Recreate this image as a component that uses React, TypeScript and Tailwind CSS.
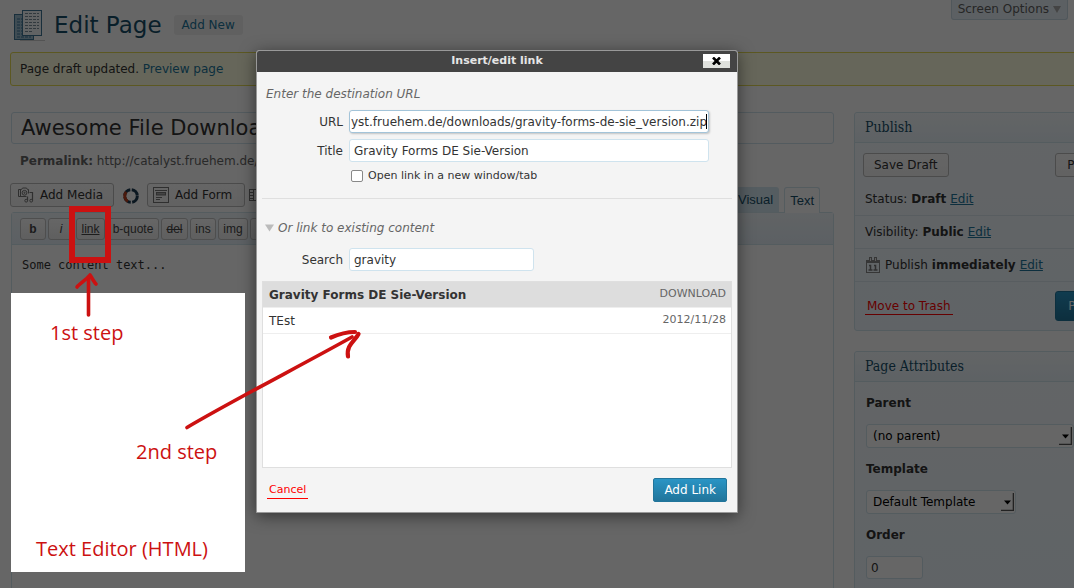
import type { ReactNode } from "react";

const results = [
  { title: "Gravity Forms DE Sie-Version", info: "DOWNLOAD", selected: true },
  { title: "TEst", info: "2012/11/28", selected: false },
];

const field =
  "h-[23px] rounded-[3px] border border-[#cfe3ee] bg-white px-1 text-xs text-[#333] outline-none";
const greyButton =
  "flex items-center rounded-[3px] border border-[#bbb] bg-gradient-to-b from-[#fefefe] to-[#f4f4f4] text-[#333]";

function PagesIcon() {
  return (
    <svg width="32" height="32" viewBox="0 0 32 32" aria-hidden="true">
      <path d="M6 31.5H31" stroke="#d0d0d0" />
      <rect x="0.5" y="5.5" width="19" height="25" fill="#9dbdd0" stroke="#3f7597" />
      <path d="M3 10h14M3 13h14M3 16h14M3 19h14M3 22h14M3 25h14M3 28h14" stroke="#3f7597" strokeDasharray="3 1" />
      <rect x="8.500" y="1.5" width="19" height="25" fill="#f3f7fa" stroke="#3f7597" />
      <path d="M11 4.5h14M11 7.5h14M11 10.5h14M11 13.5h14M11 16.5h14M11 19.5h14M11 22.5h8" stroke="#7c8f9c" strokeDasharray="3 1" />
    </svg>
  );
}

function MediaIcon() {
  return (
    <svg width="16" height="16" viewBox="0 0 16 16" fill="none" stroke="#777" aria-hidden="true">
      <path d="M.5 2.5v7h8M.5 2.5h3l1-1.500h4l1 1.500h1v4M2.5 2.5v7" />
      <circle cx="6.500" cy="5.800" r="2.400" />
      <circle cx="6.500" cy="5.800" r=".6" />
      <path d="M9.500 13.500V9.500M14.500 13.500V5.500h-3" strokeWidth="1.200" />
      <circle cx="8.200" cy="13.700" r="1.400" />
      <circle cx="13.200" cy="13.700" r="1.400" />
    </svg>
  );
}

function RingIcon() {
  return (
    <svg width="18" height="18" viewBox="0 0 18 18" fill="none" strokeWidth="3" aria-hidden="true">
      <circle cx="9" cy="9" r="6.300" stroke="#1d3a52" strokeDasharray="8.400 1.500" />
      <path d="M5.800 14.500A6.300 6.300 0 0 1 4.200 5" stroke="#b8401f" />
    </svg>
  );
}

function FormIcon() {
  return (
    <svg width="16" height="16" viewBox="0 0 16 16" fill="none" stroke="#777" aria-hidden="true">
      <rect x=".5" y=".5" width="15" height="15" />
      <path d="M2 3.5h12M3 10.5h6M3 12.5h4" />
      <rect x="3.5" y="5.5" width="9" height="2.5" fill="#aaa" />
    </svg>
  );
}

function GridIcon() {
  return (
    <svg width="16" height="16" viewBox="0 0 16 16" fill="none" stroke="#777" aria-hidden="true">
      <rect x=".5" y="2.5" width="15" height="11" />
      <path d="M4.5 2.5v11M.5 5.5h4M.5 8.5h4M.5 11.5h4M7 8h7" />
    </svg>
  );
}

function CalendarIcon() {
  return (
    <svg className="mx-px" width="14" height="17" viewBox="0 0 14 17" fill="none" stroke="#888" aria-hidden="true">
      <rect x=".5" y="3.5" width="13" height="12" />
      <path d="M1 5h12" strokeWidth="2" />
      <rect x="3.5" y=".5" width="2" height="4" fill="#eee" />
      <rect x="8.500" y=".5" width="2" height="4" fill="#eee" />
      <path d="M3 8.500h1.500v5M2.500 13h4M8 8.500h1.500v5M7.500 13h4" strokeWidth="1.500" stroke="#777" />
    </svg>
  );
}

function Edit() {
  return (
    <a href="#edit" className="text-[#21759b] underline">
      Edit
    </a>
  );
}

function Panel({ title, children }: { title: string; children: ReactNode }) {
  return (
    <section className="rounded-[3px] border border-[#d1e5ee] bg-gradient-to-b from-[#f7fcfe] to-[#eff8ff]">
      <h3 className="h-[30px] rounded-t-[3px] border-b border-[#d1e5ee] bg-gradient-to-b from-[#f7fcfe] to-[#eaf4fb] px-[10px] font-['DejaVu_Serif_Condensed','DejaVu_Serif',serif] text-sm leading-[29px] text-[#174f69]">
        {title}
      </h3>
      {children}
    </section>
  );
}

function Select({ id, value, width }: { id: string; value: string; width: string }) {
  return (
    <div className={`relative ${width}`}>
      <select
        id={id}
        className="h-6 w-full appearance-none rounded-[3px] border border-[#d1e5ee] bg-white pl-1.5 text-xs text-black"
      >
        <option>{value}</option>
      </select>
      <svg className="pointer-events-none absolute right-[2px] top-[3px]" width="13" height="18" viewBox="0 0 13 18" aria-hidden="true">
        <path d="M0 17.5h12.5V0" fill="none" stroke="#555" strokeWidth="1.600" />
        <path d="M3 7.500h7l-3.500 4z" fill="#000" />
      </svg>
    </div>
  );
}

function Editor() {
  const tag =
    "h-[22px] rounded-[3px] border border-[#c3c3c3] bg-gradient-to-b from-white to-[#eee] text-center font-['Liberation_Sans',Arial,sans-serif] text-xs text-[#464646]";
  return (
    <main className="flex min-w-0 flex-1 flex-col">
      <input
        aria-label="Page title"
        defaultValue="Awesome File Download"
        className="h-8 w-full rounded-[3px] border border-[#cfe3ee] bg-white px-[9px] text-[21px] text-[#333]"
      />
      <p className="mt-[7px] px-[9px] text-xs leading-5 text-[#666]">
        <strong>Permalink:</strong> http://catalyst.fruehem.de/
      </p>
      <div className="mt-3 flex h-[29px] items-start">
        <button className={`${greyButton} -ml-px h-6 w-[104px] gap-1.5 pl-[7px]`}>
          <MediaIcon />
          Add Media
        </button>
        <span className="ml-2 mt-1">
          <RingIcon />
        </span>
        <button className={`${greyButton} ml-[7px] h-6 w-[98px] gap-1.5 pl-[5px]`}>
          <FormIcon />
          Add Form
        </button>
        <span className="ml-1 mt-1">
          <GridIcon />
        </span>
        <div className="ml-auto mr-[14px] mt-1 flex gap-[5px] font-['Liberation_Sans',Arial,sans-serif] text-[13px] text-[#174f69]">
          <button className="h-[25px] rounded-t-[3px] bg-[#d4e8f2] px-1.5">Visual</button>
          <button className="relative h-[26px] rounded-t-[3px] border border-b-0 border-[#d1e5ee] bg-white px-[5px]">Text</button>
        </div>
      </div>
      <div className="flex flex-1 flex-col rounded-t-[3px] border border-[#d1e5ee] bg-white">
        <div className="flex h-8 items-center gap-[2px] border-b border-[#d1e5ee] bg-gradient-to-b from-[#f2f8fc] to-[#e6f0f8] px-2">
          <button className={`${tag} w-[26px] font-bold`}>b</button>
          <button className={`${tag} w-[26px] italic`}>i</button>
          <button className={`${tag} w-[29px] underline`}>link</button>
          <button className={`${tag} w-[52px]`}>b-quote</button>
          <button className={`${tag} w-[27px] line-through`}>del</button>
          <button className={`${tag} w-[26px]`}>ins</button>
          <button className={`${tag} w-[30px]`}>img</button>
          <button className={`${tag} w-[26px]`}>ul</button>
        </div>
        <textarea
          aria-label="Page content"
          defaultValue="Some content text..."
          className="w-full flex-1 resize-none p-[10px] font-['DejaVu_Sans_Mono',monospace] text-xs leading-5 text-[#333]"
        />
      </div>
    </main>
  );
}

function Sidebar() {
  const row = "flex h-[33px] items-center gap-1 border-b border-[#dde9f0] px-[10px]";
  return (
    <aside className="flex w-[281px] shrink-0 flex-col gap-5 text-xs text-[#333]">
      <Panel title="Publish">
        <div className="flex justify-between px-2 pt-[10px]">
          <button className={`${greyButton} h-6 px-[10px]`}>Save Draft</button>
          <button className={`${greyButton} h-6 px-[11px]`}>Preview</button>
        </div>
        <div className="mt-[6px]">
          <p className={row}>
            <span>Status:</span>
            <strong>Draft</strong>
            <Edit />
          </p>
          <p className={row}>
            <span>Visibility:</span>
            <strong>Public</strong>
            <Edit />
          </p>
          <p className={row}>
            <CalendarIcon />
            <span>Publish</span>
            <strong>immediately</strong>
            <Edit />
          </p>
        </div>
        <div className="flex h-12 items-center justify-between px-[10px]">
          <a href="#trash" className="border-b border-[#f00] px-[2px] text-[#f00]">
            Move to Trash
          </a>
          <button className="h-[30px] rounded-[3px] border border-[#21759b] bg-gradient-to-b from-[#2a95c5] to-[#21759b] px-3 text-white">
            Publish
          </button>
        </div>
      </Panel>
      <Panel title="Page Attributes">
        <div className="flex flex-col px-[11px] pb-6 pt-3">
          <label htmlFor="parent" className="mb-3 font-bold leading-[18px]">Parent</label>
          <Select id="parent" value="(no parent)" width="w-[208px]" />
          <label htmlFor="template" className="mb-3 mt-3 font-bold leading-[18px]">Template</label>
          <Select id="template" value="Default Template" width="w-[150px]" />
          <label htmlFor="order" className="mb-3 mt-3 font-bold leading-[18px]">Order</label>
          <input id="order" defaultValue="0" className={`${field} w-[57px]`} />
        </div>
      </Panel>
    </aside>
  );
}

function LinkDialog() {
  return (
    <div
      role="dialog"
      aria-labelledby="dialog-title"
      className="absolute left-[256px] top-[50px] flex w-[482px] flex-col rounded-t-[3px] border border-[#999] bg-[#f4f4f4] text-xs text-[#333] shadow-[0_3px_16px_rgba(0,0,0,0.5)]"
    >
      <div className="relative flex h-[21px] items-center justify-center rounded-t-[2px] bg-[#444]">
        <h2 id="dialog-title" className="text-[11px] font-bold text-[#e5e5e5]">Insert/edit link</h2>
        <button
          aria-label="Close"
          className="absolute right-[7px] top-[3px] flex h-[14px] w-[27px] items-center justify-center bg-gradient-to-b from-white from-50% to-[#dfe1dd] to-50%"
        >
          <svg width="9" height="8" viewBox="0 0 9 8" aria-hidden="true">
            <path d="M1 .5l7 7M8 .5l-7 7" stroke="#000" strokeWidth="2.600" />
          </svg>
        </button>
      </div>

      <div className="mx-[5px] flex flex-col border-b border-[#dfdfdf] px-1 pb-[14px] pt-[13px]">
        <p className="mb-[7px] italic leading-[18px] text-[#666]">Enter the destination URL</p>
        <div className="flex items-center gap-[6px]">
          <label htmlFor="url" className="w-[77px] text-right">URL</label>
          <div className="relative flex">
            <input
              id="url"
              defaultValue="yst.fruehem.de/downloads/gravity-forms-de-sie_version.zip"
              className="h-[23px] w-[360px] rounded-[3px] border border-[#a3c4d9] bg-white px-px text-xs text-[#333] shadow-[1px_1px_2px_rgba(0,0,0,0.2)] outline-none"
            />
            <span className="absolute right-[2px] top-1 h-[15px] w-px bg-black" />
          </div>
        </div>
        <div className="mt-[6px] flex items-center gap-[6px]">
          <label htmlFor="title" className="w-[77px] text-right">Title</label>
          <input id="title" defaultValue="Gravity Forms DE Sie-Version" className={`${field} w-[360px]`} />
        </div>
        <label className="mt-[6px] flex items-center gap-[5px] pl-[85px] text-[11px] leading-4">
          <input type="checkbox" className="h-3 w-3 appearance-none rounded-[2px] border border-[#888] bg-white" />
          Open link in a new window/tab
        </label>
      </div>

      <div className="mt-5 flex items-center gap-1 px-2 leading-[18px]">
        <svg width="9" height="8" viewBox="0 0 9 8" aria-hidden="true">
          <path d="M0 .5h9l-4.500 7z" fill="#bbb" />
        </svg>
        <p className="italic text-[#666]">Or link to existing content</p>
      </div>
      <div className="mt-[11px] flex items-center gap-[6px] px-[9px]">
        <label htmlFor="search" className="w-[77px] text-right">Search</label>
        <input id="search" defaultValue="gravity" className={`${field} w-[185px]`} />
      </div>

      <ul className="mx-[5px] mt-[10px] h-[187px] border border-[#dfdfdf] bg-white">
        {results.map((item) => (
          <li
            key={item.title}
            className={`flex h-[26px] items-center justify-between border-b border-[#eee] pl-1.5 pr-[5px] ${item.selected ? "bg-[#ddd] font-bold" : ""}`}
          >
            <span>{item.title}</span>
            <span className="text-[11px] font-normal text-[#666]">{item.info}</span>
          </li>
        ))}
      </ul>

      <div className="flex items-center justify-between px-[10px] py-[10px]">
        <a href="#cancel" className="border-b border-[#f00] px-[2px] text-[11px] leading-4 text-[#f00]">
          Cancel
        </a>
        <button className="h-6 rounded-[2px] border border-[#21759b] bg-gradient-to-b from-[#2a95c5] to-[#21759b] px-[10px] text-white">
          Add Link
        </button>
      </div>
    </div>
  );
}

function Annotations() {
  return (
    <div className="pointer-events-none font-['Open_Sans','Noto_Sans',sans-serif] text-xl leading-7 text-[#cc1111]">
      <div className="absolute left-[69px] top-[206px] h-[57px] w-[42px] border-[6px] border-[#cc1111]" />
      <div className="absolute left-[11px] top-[293px] h-[279px] w-[234px] bg-white">
        <p className="absolute left-[39px] top-[26px] whitespace-nowrap">1st step</p>
        <p className="absolute left-[125px] top-[145px] whitespace-nowrap">2nd step</p>
        <p className="absolute left-[25px] top-[242px] whitespace-nowrap">Text Editor (HTML)</p>
      </div>
      <svg
        className="absolute left-0 top-0"
        width="400"
        height="450"
        viewBox="0 0 400 450"
        fill="none"
        stroke="#cc1111"
        strokeLinecap="round"
        strokeLinejoin="round"
        aria-hidden="true"
      >
        <path d="M88.500 315V278" strokeWidth="3.600" />
        <path d="M77 287C79 284 86 280 90 275C92 278 94 282 96 284" strokeWidth="3.600" />
        <path d="M187 427.500C230 402 300 366 352 337" strokeWidth="3.600" />
        <path d="M331 337.500C339 334 346 332 355 332" strokeWidth="4.200" />
        <path d="M358.500 334C355 341 346 345 348 356.500" strokeWidth="4.200" />
      </svg>
    </div>
  );
}

export default function App() {
  return (
    <div className="relative h-screen overflow-hidden bg-white font-['DejaVu_Sans',sans-serif] text-xs text-[#333]">
      <div className="flex h-full flex-col pl-[10px]">
        <header className="flex h-[52px] shrink-0 items-start justify-between pl-1 pr-1.5">
          <div className="flex items-center gap-2 pt-[9px]">
            <PagesIcon />
            <h1 className="text-[23px] leading-8 text-[#174f69]">Edit Page</h1>
            <a href="#new" className="ml-1 rounded-[3px] bg-[#f1f1f1] px-2 leading-5 text-[#21759b]">
              Add New
            </a>
          </div>
          <button className="flex h-5 items-center gap-1 rounded-b-[3px] border border-t-0 border-[#c7d9e4] bg-[#e6f0f8] px-[6px] pb-[2px] text-[#606060]">
            Screen Options
            <svg width="8" height="8" viewBox="0 0 8 8" aria-hidden="true">
              <path d="M0 1h8l-4 7z" fill="#aaa" />
            </svg>
          </button>
        </header>
        <div className="-mr-[61px] flex flex-1 flex-col">
          <p className="rounded-[3px] border border-[#e6db55] bg-[#ffffe0] px-[9px] py-[6px] leading-5">
            Page draft updated.{" "}
            <a href="#preview" className="text-[#21759b]">
              Preview page
            </a>
          </p>
          <div className="mt-[26px] flex flex-1 gap-5 pl-px">
            <Editor />
            <Sidebar />
          </div>
        </div>
      </div>
      <div className="absolute inset-0 bg-black/60" />
      <LinkDialog />
      <Annotations />
    </div>
  );
}
